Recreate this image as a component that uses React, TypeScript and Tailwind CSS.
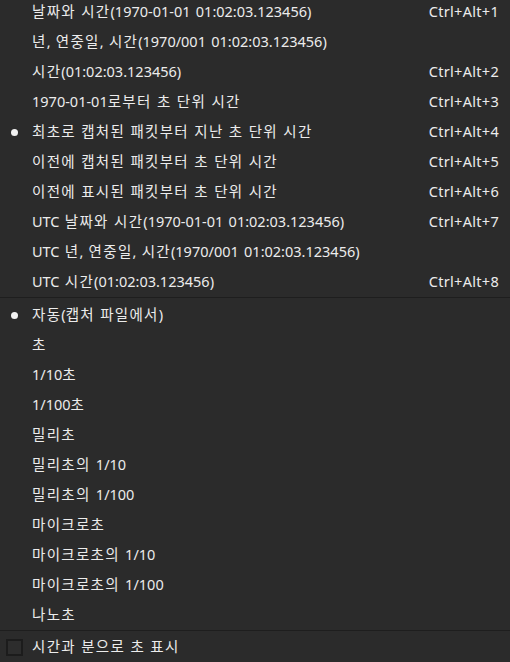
type Item = { label: string; shortcut?: string; checked?: boolean };

const formats: Item[] = [
  { label: "날짜와 시간(1970-01-01 01:02:03.123456)", shortcut: "Ctrl+Alt+1" },
  { label: "년, 연중일, 시간(1970/001 01:02:03.123456)" },
  { label: "시간(01:02:03.123456)", shortcut: "Ctrl+Alt+2" },
  { label: "1970-01-01로부터 초 단위 시간", shortcut: "Ctrl+Alt+3" },
  { label: "최초로 캡처된 패킷부터 지난 초 단위 시간", shortcut: "Ctrl+Alt+4", checked: true },
  { label: "이전에 캡처된 패킷부터 초 단위 시간", shortcut: "Ctrl+Alt+5" },
  { label: "이전에 표시된 패킷부터 초 단위 시간", shortcut: "Ctrl+Alt+6" },
  { label: "UTC 날짜와 시간(1970-01-01 01:02:03.123456)", shortcut: "Ctrl+Alt+7" },
  { label: "UTC 년, 연중일, 시간(1970/001 01:02:03.123456)" },
  { label: "UTC 시간(01:02:03.123456)", shortcut: "Ctrl+Alt+8" },
];

const precisions: Item[] = [
  { label: "자동(캡처 파일에서)", checked: true },
  { label: "초" },
  { label: "1/10초" },
  { label: "1/100초" },
  { label: "밀리초" },
  { label: "밀리초의 1/10" },
  { label: "밀리초의 1/100" },
  { label: "마이크로초" },
  { label: "마이크로초의 1/10" },
  { label: "마이크로초의 1/100" },
  { label: "나노초" },
];

function Label({ text }: { text: string }) {
  const parts = text.split(/([\uAC00-\uD7A3]+)/);
  return (
    <>
      {parts.map((p, i) =>
        /[\uAC00-\uD7A3]/.test(p) ? (
          <span key={i} className="tracking-[1.3px]">
            {p}
          </span>
        ) : (
          <span key={i}>{p}</span>
        )
      )}
    </>
  );
}

function Row({ item }: { item: Item }) {
  return (
    <div className="flex h-[30px] items-center">
      <div className="flex w-8 shrink-0 justify-center pr-[3px]">
        {item.checked && <span className="h-[7px] w-[7px] rounded-full bg-[#f2f2f2]" />}
      </div>
      <span className="flex-1 whitespace-nowrap">
        <Label text={item.label} />
      </span>
      {item.shortcut && <span className="pr-[11px] tracking-[0.3px]">{item.shortcut}</span>}
    </div>
  );
}

function Separator() {
  return <div className="mb-[2px] h-px bg-[#1e1e1e]" />;
}

export default function App() {
  return (
    <div
      className="h-[662px] w-[510px] overflow-hidden bg-[#2b2b2b] text-[14.5px] text-[#ececec] [word-spacing:1.5px]"
      style={{ fontFamily: '"Noto Sans", "Noto Sans CJK KR", sans-serif' }}
    >
      <div className="-mt-[3px] flex flex-col">
        {formats.map((f) => (
          <Row key={f.label} item={f} />
        ))}
        <Separator />
        {precisions.map((p) => (
          <Row key={p.label} item={p} />
        ))}
        <Separator />
        <div className="-mt-[1px] flex h-[30px] items-center">
          <div className="flex w-8 shrink-0 justify-start pl-[6px]">
            <span className="h-[17px] w-[17px] border-2 border-[#1c1c1c] bg-[#2d2d2d]" />
          </div>
          <span>
            <Label text="시간과 분으로 초 표시" />
          </span>
        </div>
      </div>
    </div>
  );
}
